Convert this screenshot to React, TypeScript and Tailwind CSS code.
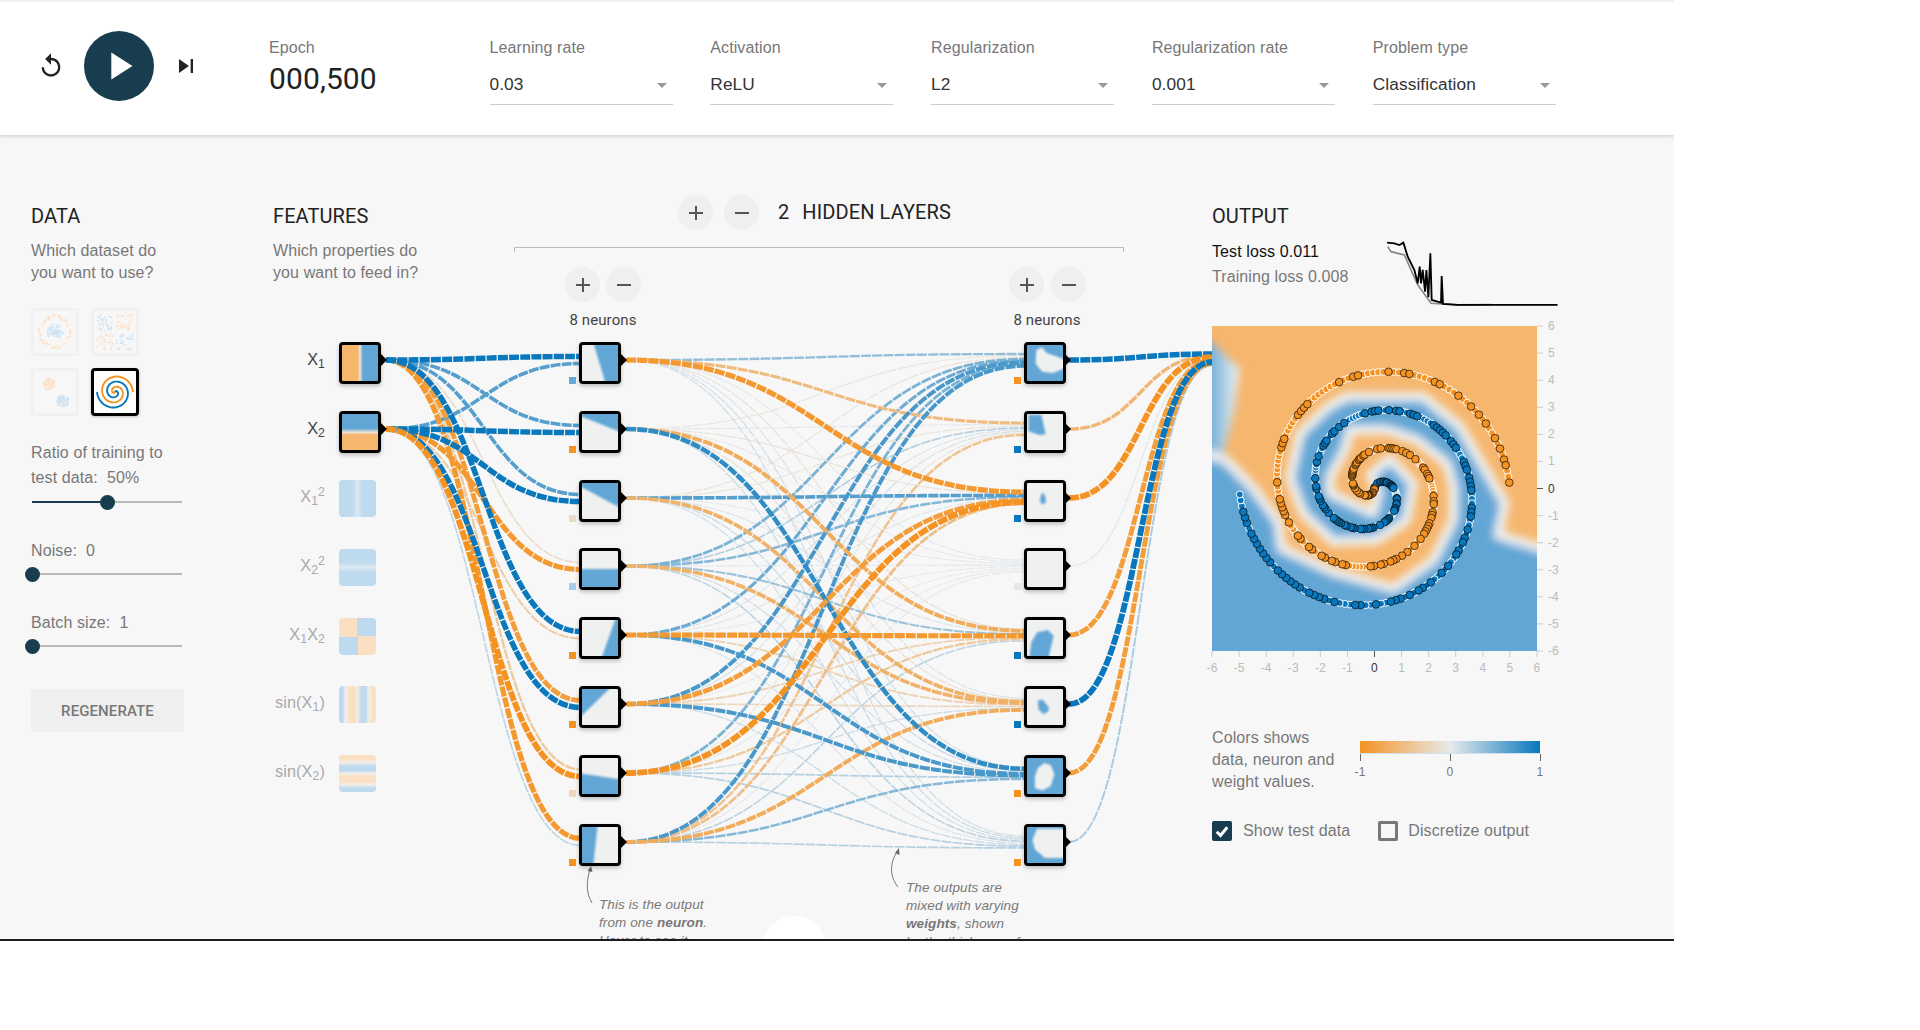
import React from "react";

const BLUE = "#0877bd";
const ORANGE = "#f59322";
const MID = "#e8eaeb";
const FIELD_BLUE = "#62a6d5";
const FIELD_ORANGE = "#f6b66e";

const ROW_TOPS = [342, 411, 480, 548, 617, 686, 755, 824];

// weights read off the reference by eye
const INPUT_WEIGHTS = [
  [0.95, 0.65],
  [0.65, 0.95],
  [0.65, 0.95],
  [-0.2, -0.9],
  [0.95, -0.35],
  [-0.85, 0.95],
  [-0.4, -1],
  [-0.9, 0.22],
];

// columns: first layer neuron, rows: second layer neuron
const HIDDEN_WEIGHTS = [
  [0.4, -0.08, -0.1, 0.5, 0.55, 0.7, 0.5, 0.7],
  [-0.55, 0.04, -0.1, 0.25, 0.08, 0.1, -0.08, -0.45],
  [-0.9, -0.12, 0.65, 0.45, 0.06, -0.85, -1, -0.5],
  [0.03, 0.03, 0.03, 0.04, 0.03, -0.03, 0.03, 0.03],
  [-0.12, -0.7, 0.08, 0.35, -0.9, -0.3, -0.4, 0.22],
  [0.08, -0.12, -0.65, -0.65, -0.3, -0.25, 0.15, -0.7],
  [0.12, 0.8, 0.15, 0.12, 0.7, 0.7, 0.25, 0.45],
  [0.12, 0.15, 0.12, 0.22, 0.08, 0.15, 0.25, 0.25],
];

const OUTPUT_WEIGHTS = [0.95, -0.6, -1, 0.06, -0.85, 1, -0.85, 0.3];

function hex(c: string) {
  return [1, 3, 5].map((i) => parseInt(c.slice(i, i + 2), 16));
}

function weightColor(w: number) {
  const a = hex(MID);
  const b = hex(w > 0 ? BLUE : ORANGE);
  const t = Math.min(1, Math.pow(Math.abs(w), 1.1) * 1.05);
  const m = a.map((v, i) => Math.round(v + (b[i] - v) * t));
  return `rgb(${m[0]},${m[1]},${m[2]})`;
}

function Link({ x0, y0, x1, y1, w }: { x0: number; y0: number; x1: number; y1: number; w: number }) {
  const mid = (x0 + x1) / 2;
  return (
    <path
      d={`M${x0} ${y0}C${mid} ${y0} ${mid} ${y1} ${x1} ${y1}`}
      fill="none"
      stroke={weightColor(w)}
      strokeWidth={1 + 4.8 * Math.pow(Math.abs(w), 1.4)}
      strokeDasharray="10 1.2"
    />
  );
}

function buildLinks() {
  const links: { x0: number; y0: number; x1: number; y1: number; w: number }[] = [];
  INPUT_WEIGHTS.forEach((pair, n) => {
    pair.forEach((w, i) => {
      links.push({ x0: 386, y0: [342, 411][i] + 18, x1: 581, y1: ROW_TOPS[n] + 14.5 + i * 7, w });
    });
  });
  HIDDEN_WEIGHTS.forEach((row, n) => {
    row.forEach((w, j) => {
      links.push({ x0: 626, y0: ROW_TOPS[j] + 18, x1: 1024, y1: ROW_TOPS[n] + 12 + j * 1.7, w });
    });
  });
  OUTPUT_WEIGHTS.forEach((w, n) => {
    links.push({ x0: 1069, y0: ROW_TOPS[n] + 18, x1: 1212, y1: 354 + n * 1.6, w });
  });
  return links.sort((a, b) => Math.abs(a.w) - Math.abs(b.w));
}

function Arrow({ x, y }: { x: number; y: number }) {
  return <path d={`M${x} ${y - 6}L${x + 6} ${y}L${x} ${y + 6}z`} fill="#000" />;
}

function Network() {
  return (
    <svg viewBox="273 135 939 806" className="absolute left-0 top-0 h-[806px] w-[939px]">
      <path d="M514.5 252V247.5H1123.5V252" fill="none" stroke="#bbb" strokeWidth="1" />
      {buildLinks().map((l, i) => (
        <Link key={i} {...l} />
      ))}
      {[342, 411].map((y) => (
        <Arrow key={y} x={381} y={y + 18} />
      ))}
      {ROW_TOPS.map((y) => (
        <Arrow key={y} x={621} y={y + 18} />
      ))}
      {ROW_TOPS.map((y) => (
        <Arrow key={y} x={1065} y={y + 18} />
      ))}
      <path d="M592 903C585 892 587 878 590.5 868" fill="none" stroke="#777" strokeWidth="1" />
      <path d="M587.5 871L591 866L592.5 872z" fill="#666" />
      <path d="M898 887C889 876 890 862 897.5 851" fill="none" stroke="#777" strokeWidth="1" />
      <path d="M895 853L899 848L899.5 855z" fill="#666" />
    </svg>
  );
}

const P = FIELD_BLUE;
const W = "#eff1f1";

const LAYER_ONE: { bias: string; pts: string }[] = [
  { bias: "#66a9d8", pts: "30,0 100,0 100,100 67,100" },
  { bias: ORANGE, pts: "0,3 0,0 100,0 100,52" },
  { bias: "#e9dac7", pts: "0,6 0,0 100,0 100,72" },
  { bias: "#a9cde6", pts: "0,50 100,50 100,100 0,100" },
  { bias: ORANGE, pts: "96,0 100,0 100,100 52,100" },
  { bias: ORANGE, pts: "0,0 88,0 0,85" },
  { bias: "#edd6be", pts: "0,42 30,48 100,60 100,100 0,100" },
  { bias: ORANGE, pts: "0,0 44,0 31,100 0,100" },
];

const LAYER_TWO: { bias: string; base: string; fill: string; pts: string }[] = [
  { bias: ORANGE, base: P, fill: W, pts: "26,14 42,6 54,22 100,42 100,62 72,78 42,74 24,52" },
  { bias: BLUE, base: W, fill: P, pts: "4,2 40,2 52,56 34,58 4,48" },
  { bias: BLUE, base: W, fill: P, pts: "40,30 46,28 52,42 52,56 40,58 36,48" },
  { bias: "#e7e7e5", base: W, fill: W, pts: "1,1" },
  { bias: BLUE, base: W, fill: P, pts: "6,100 12,62 28,34 58,28 74,44 58,100" },
  { bias: BLUE, base: W, fill: P, pts: "30,32 44,30 60,50 60,62 46,70 32,56" },
  { bias: ORANGE, base: P, fill: W, pts: "30,28 48,14 66,20 76,46 66,78 44,90 22,84 22,52" },
  { bias: ORANGE, base: P, fill: W, pts: "28,5 100,5 100,86 50,86 22,62 15,36" },
];

function clampPts(pts: string) {
  return pts
    .split(" ")
    .map((p) =>
      p
        .split(",")
        .map((v) => (+v <= 0 ? -12 : +v >= 100 ? 112 : +v))
        .join(",")
    )
    .join(" ");
}

function Neuron({ left, top, base, fill, pts, bias }: { left: number; top: number; base: string; fill: string; pts: string; bias: string }) {
  return (
    <>
      <div
        className="absolute h-[42px] w-[42px] overflow-hidden rounded-[4px] border-[3px] border-black shadow-[0_2px_4px_rgba(0,0,0,0.25)]"
        style={{ left: left - 273, top: top - 135, background: base }}
      >
        <svg viewBox="0 0 100 100" className="h-full w-full overflow-visible blur-[1px]">
          <polygon points={clampPts(pts)} fill={fill} />
        </svg>
      </div>
      <div className="absolute h-[7px] w-[7px]" style={{ left: left - 283, top: top + 35 - 135, background: bias }} />
    </>
  );
}

const FEATURES = [
  { top: 480, label: <>X<sub>1</sub><sup>2</sup></>, cls: "bg-[linear-gradient(90deg,#bedaee_0%,#bedaee_36%,#dde9f1_50%,#bedaee_64%,#bedaee_100%)]" },
  { top: 549, label: <>X<sub>2</sub><sup>2</sup></>, cls: "bg-[linear-gradient(180deg,#bedaee_0%,#bedaee_36%,#dde9f1_50%,#bedaee_64%,#bedaee_100%)]" },
  { top: 618, label: <>X<sub>1</sub>X<sub>2</sub></>, cls: "bg-[conic-gradient(#bedaee_0deg,#bedaee_90deg,#fbdfc3_90deg,#fbdfc3_180deg,#bedaee_180deg,#bedaee_270deg,#fbdfc3_270deg,#fbdfc3_360deg)]" },
  { top: 686, label: <>sin(X<sub>1</sub>)</>, cls: "bg-[linear-gradient(90deg,#bedaee_0%,#bedaee_10%,#f3eee8_18%,#fbdfc3_28%,#fbdfc3_42%,#f3eee8_50%,#bedaee_60%,#bedaee_72%,#f3eee8_82%,#fbdfc3_90%,#fbdfc3_100%)]" },
  { top: 755, label: <>sin(X<sub>2</sub>)</>, cls: "bg-[linear-gradient(180deg,#fbdfc3_0%,#fbdfc3_12%,#f3eee8_20%,#bedaee_30%,#bedaee_42%,#f3eee8_50%,#fbdfc3_58%,#fbdfc3_72%,#f3eee8_80%,#bedaee_90%,#bedaee_100%)]" },
];

function FeatureLabel({ top, active, children }: { top: number; active?: boolean; children: React.ReactNode }) {
  return (
    <div
      className={`absolute left-[-67px] w-[119px] text-right font-['Liberation_Sans',sans-serif] text-[16.3px] leading-[42px] ${active ? "text-[#444]" : "text-[#aaa]"}`}
      style={{ top: top - 135 }}
    >
      {children}
    </div>
  );
}

function rng(seed: number) {
  let s = seed;
  return () => {
    s = (s * 16807) % 2147483647;
    return s / 2147483647;
  };
}

function dots(kind: "circle" | "xor" | "gauss") {
  const r = rng(kind.length * 977 + 5);
  const out: { x: number; y: number; c: string }[] = [];
  const L = "#cfe3f2";
  const O = "#fbe3ca";
  for (let i = 0; i < 160; i++) {
    if (kind === "circle") {
      const t = r() * Math.PI * 2;
      if (i % 2) {
        const d = r() * 8;
        out.push({ x: 21 + d * Math.cos(t), y: 21 + d * Math.sin(t), c: L });
      } else {
        const d = 13.5 + r() * 3.5;
        out.push({ x: 21 + d * Math.cos(t), y: 21 + d * Math.sin(t), c: O });
      }
    } else if (kind === "xor") {
      const x = 3 + r() * 36;
      const y = 3 + r() * 36;
      if (Math.abs(x - 21) < 1.5 || Math.abs(y - 21) < 1.5) continue;
      out.push({ x, y, c: (x - 21) * (y - 21) > 0 ? L : O });
    } else {
      const t = r() * Math.PI * 2;
      const d = Math.sqrt(r()) * 6;
      const pos = i % 2 === 0;
      out.push({ x: (pos ? 29 : 15) + d * Math.cos(t), y: (pos ? 30 : 13) + d * Math.sin(t), c: pos ? L : O });
    }
  }
  return out;
}

function DotThumb({ kind }: { kind: "circle" | "xor" | "gauss" }) {
  return (
    <div className="h-[48px] w-[48px] rounded-[4px] border-[3px] border-[#f1f1f1]">
      <svg viewBox="0 0 42 42" className="h-[42px] w-[42px]">
        {dots(kind).map((d, i) => (
          <rect key={i} x={d.x - 0.8} y={d.y - 0.8} width="1.6" height="1.6" fill={d.c} />
        ))}
      </svg>
    </div>
  );
}

function spiralLine(delta: number) {
  const pts: string[] = [];
  for (let i = 0; i <= 80; i++) {
    const f = i / 80;
    const r = f * 18;
    const t = 1.75 * f * 2 * Math.PI + delta;
    pts.push(`${(21 + r * Math.sin(t)).toFixed(2)},${(21 - r * Math.cos(t)).toFixed(2)}`);
  }
  return pts.join(" ");
}

function SpiralThumb() {
  return (
    <div className="h-[48px] w-[48px] rounded-[4px] border-[3px] border-black bg-white shadow-[0_1px_3px_rgba(0,0,0,0.25)]">
      <svg viewBox="0 0 42 42" className="h-[42px] w-[42px]">
        <polyline points={spiralLine(0)} fill="none" stroke={BLUE} strokeWidth="1.9" />
        <polyline points={spiralLine(Math.PI)} fill="none" stroke={ORANGE} strokeWidth="1.9" />
      </svg>
    </div>
  );
}

function Slider({ value }: { value: number }) {
  return (
    <div className="relative h-[16px] w-[152px]">
      <div className="absolute left-[1px] top-[7px] h-[2px] w-[150px] bg-[#b9b9b9]" />
      <div className="absolute left-[1px] top-[7px] h-[2px] bg-[#183d4e]" style={{ width: value * 150 }} />
      <div
        className="absolute top-[0.5px] h-[15px] w-[15px] rounded-full bg-[#183d4e]"
        style={{ left: value * 150 - 6.5 }}
      />
    </div>
  );
}

function Select({ label, value }: { label: string; value: string }) {
  return (
    <div className="w-[183px] font-['Liberation_Sans',sans-serif]">
      <div className="text-[16px] leading-[20px] text-[#777]">{label}</div>
      <div className="mt-[11px] flex h-[36px] items-center justify-between border-b border-[#ccc] pb-[3px] pr-[6px]">
        <span className="text-[17.3px] text-[#333]">{value}</span>
        <span className="h-0 w-0 border-x-[5px] border-t-[5px] border-x-transparent border-t-[#999]" />
      </div>
    </div>
  );
}

function RoundButton({ minus }: { minus?: boolean }) {
  return (
    <div className="flex h-[35px] w-[35px] items-center justify-center rounded-full bg-[#efefef]">
      <svg viewBox="0 0 24 24" className="h-[24px] w-[24px]" fill="#555">
        <path d={minus ? "M19 13H5v-2h14v2z" : "M19 13h-6v6h-2v-6H5v-2h6V5h2v6h6v2z"} />
      </svg>
    </div>
  );
}

const BOUNDARY =
  "20,700 66,706 110,722 190,805 265,905 275,985 430,1055 610,1105 730,1020 790,900 790,800 770,730 680,660 590,630 480,630 465,690 420,770 420,820 550,880 565,815 540,765 600,715 670,790 650,900 560,960 430,965 340,880 300,775 330,640 415,560 470,530 700,530 810,620 880,740 945,850 925,945 1090,995 1090,1340 20,1340";

function spiralPoints(delta: number, seed: number) {
  const r = rng(seed);
  const train: { x: number; y: number }[] = [];
  const test: { x: number; y: number }[] = [];
  for (let i = 0; i < 250; i++) {
    const f = i / 250;
    const d = f * 5;
    const t = 1.75 * f * 2 * Math.PI + delta;
    const p = { x: 553.5 + 81.25 * d * Math.sin(t), y: 805.5 - 81.25 * d * Math.cos(t) };
    if (r() < 0.5) test.push(p);
    else train.push(p);
  }
  return { train, test };
}

function Points() {
  const blue = spiralPoints(0, 4242);
  const orange = spiralPoints(Math.PI, 1717);
  return (
    <>
      {[...blue.train.map((p) => ({ ...p, c: BLUE })), ...orange.train.map((p) => ({ ...p, c: ORANGE }))].map((p, i) => (
        <circle key={i} cx={p.x} cy={p.y} r="10.5" fill={p.c} stroke="#fff" strokeWidth="3" />
      ))}
      {[...blue.test.map((p) => ({ ...p, c: BLUE })), ...orange.test.map((p) => ({ ...p, c: ORANGE }))].map((p, i) => (
        <circle key={i} cx={p.x} cy={p.y} r="11.5" fill={p.c} stroke="#000" strokeOpacity="0.65" strokeWidth="3" />
      ))}
    </>
  );
}

function Plot() {
  const ticks = [-6, -5, -4, -3, -2, -1, 0, 1, 2, 3, 4, 5, 6];
  return (
    <svg viewBox="1212 326 350 350" className="h-[350px] w-[350px] overflow-visible font-['Liberation_Sans',sans-serif]">
      <defs>
        <filter id="fieldBlur" x="-10%" y="-10%" width="120%" height="120%">
          <feGaussianBlur stdDeviation="13" />
        </filter>
        <linearGradient id="cornerFade" x1="0" x2="1" y1="0" y2="0">
          <stop offset="0.3" stopColor="#6fadd8" />
          <stop offset="0.95" stopColor="#e9eef0" />
        </linearGradient>
      </defs>
      <svg x="1212" y="326" width="325" height="325" viewBox="66 318 975 975">
        <rect x="66" y="318" width="975" height="975" fill={FIELD_ORANGE} />
        <g filter="url(#fieldBlur)">
          <polygon points="20,330 66,370 150,445 135,560 100,705 20,710" fill="url(#cornerFade)" />
          <polygon points={BOUNDARY} fill={FIELD_BLUE} stroke="#eef1f2" strokeWidth="28" strokeLinejoin="round" />
        </g>
        <Points />
      </svg>
      {ticks.map((t) => {
        const y = 651 - (t + 6) * 27.083;
        const x = 1212 + (t + 6) * 27.083;
        const zero = t === 0;
        return (
          <g key={t}>
            <line x1="1537" x2="1543" y1={y} y2={y} stroke={zero ? "#555" : "#ccc"} />
            <text x="1548" y={y + 4} fontSize="12" fill={zero ? "#333" : "#bbb"}>
              {t}
            </text>
            <line x1={x} x2={x} y1="651" y2="657" stroke={zero ? "#555" : "#ccc"} />
            <text x={x} y="672" fontSize="12" textAnchor="middle" fill={zero ? "#333" : "#bbb"}>
              {t}
            </text>
          </g>
        );
      })}
    </svg>
  );
}

function LossChart() {
  const black =
    "588,68 610,70 625,75 637,68 650,110 670,150 680,190 686,140 690,190 695,150 702,215 706,150 712,232 718,100 722,240 750,248 752,168 756,252 800,255 1100,255";
  const gray = "590,80 600,95 640,105 660,150 680,195 720,250 800,255 900,254";
  return (
    <svg viewBox="585 60 520 200" className="h-[66.6px] w-[173.3px]">
      <polyline points={gray} fill="none" stroke="#888" strokeWidth="5" />
      <polyline points={black} fill="none" stroke="#000" strokeWidth="5.5" />
    </svg>
  );
}

export default function App() {
  return (
    <div className="min-h-[1030px] bg-white tracking-[0.1px]">
      <div className="h-[941px] w-[1674px] overflow-hidden border-b-2 border-[#1d1d1d] bg-[#f7f7f7]">
        {/* Top controls */}
        <header className="relative z-10 flex h-[135px] items-start border-t-2 border-[#f0f0f0] bg-white shadow-[0_1px_4px_rgba(0,0,0,0.18)]">
          <div className="ml-[37px] mt-[29px] flex items-center">
            <svg viewBox="0 0 24 24" className="h-[28px] w-[28px]" fill="#222">
              <path d="M12 5V1L7 6l5 5V7c3.31 0 6 2.69 6 6s-2.69 6-6 6-6-2.69-6-6H4c0 4.42 3.58 8 8 8s8-3.58 8-8-3.58-8-8-8z" />
            </svg>
            <div className="ml-[19px] flex h-[70px] w-[70px] items-center justify-center rounded-full bg-[#183d4e]">
              <svg viewBox="0 0 24 24" className="h-[46px] w-[46px]" fill="#fff">
                <path d="M8 5v14l11-7z" />
              </svg>
            </div>
            <svg viewBox="0 0 24 24" className="ml-[18px] h-[28px] w-[28px]" fill="#222">
              <path d="M6 18l8.5-6L6 6v12zM16 6v12h2V6h-2z" />
            </svg>
          </div>
          <div className="ml-[69px] mt-[36px] w-[220.5px]">
            <div className="font-['Liberation_Sans',sans-serif] text-[16px] leading-[20px] text-[#777]">Epoch</div>
            <div className="mt-[1px] font-['Roboto',sans-serif] text-[30px] leading-[40px] text-[#222]">000,500</div>
          </div>
          <div className="mt-[36px] flex gap-[37.8px]">
            <Select label="Learning rate" value="0.03" />
            <Select label="Activation" value="ReLU" />
            <Select label="Regularization" value="L2" />
            <Select label="Regularization rate" value="0.001" />
            <Select label="Problem type" value="Classification" />
          </div>
        </header>

        <main className="relative flex h-[804px]">
          {/* Data column */}
          <section className="w-[273px] pl-[31px] pt-[69px] font-['Liberation_Sans',sans-serif] text-[16px] leading-[22px] text-[#777]">
            <h4 className="font-['Roboto',sans-serif] text-[20px] leading-[24px] text-[#222]">DATA</h4>
            <p className="mt-[12px]">
              Which dataset do
              <br />
              you want to use?
            </p>
            <div className="mt-[24px] grid w-[108px] grid-cols-2 gap-x-[12px] gap-y-[12px]">
              <DotThumb kind="circle" />
              <DotThumb kind="xor" />
              <DotThumb kind="gauss" />
              <SpiralThumb />
            </div>
            <p className="mt-[24px] leading-[25px]">
              Ratio of training to
              <br />
              test data:&nbsp; 50%
            </p>
            <div className="mt-[4px]">
              <Slider value={0.5} />
            </div>
            <p className="mt-[30px]">Noise:&nbsp; 0</p>
            <div className="mt-[4px]">
              <Slider value={0} />
            </div>
            <p className="mt-[30px]">Batch size:&nbsp; 1</p>
            <div className="mt-[4px]">
              <Slider value={0} />
            </div>
            <button className="mt-[35px] h-[43px] w-[153px] rounded-[3px] bg-[#efefef] font-['Roboto',sans-serif] text-[15px] font-medium text-[#777]">
              REGENERATE
            </button>
          </section>

          {/* Network column */}
          <section className="relative w-[939px]">
            <Network />
            <div className="relative flex items-start">
              <div className="w-[405px] pt-[69px] font-['Liberation_Sans',sans-serif] text-[16px] leading-[22px] text-[#777]">
                <h4 className="font-['Roboto',sans-serif] text-[20px] leading-[24px] text-[#222]">FEATURES</h4>
                <p className="mt-[12px]">
                  Which properties do
                  <br />
                  you want to feed in?
                </p>
              </div>
              <div className="flex items-center gap-[11px] pt-[60px]">
                <RoundButton />
                <RoundButton minus />
                <span className="ml-[8px] font-['Roboto',sans-serif] text-[20px] leading-[35px] text-[#222]">2</span>
                <span className="ml-[2px] font-['Roboto',sans-serif] text-[20px] leading-[35px] text-[#222]">HIDDEN LAYERS</span>
              </div>
            </div>

            {/* input nodes */}
            <div className="absolute left-[66px] top-[207px] h-[42px] w-[42px] rounded-[4px] border-[3px] border-black bg-[linear-gradient(90deg,#f6b66e_0%,#f6b66e_44%,#efe4d6_50%,#62a6d5_58%,#62a6d5_100%)] shadow-[0_2px_4px_rgba(0,0,0,0.25)]" />
            <div className="absolute left-[66px] top-[276px] h-[42px] w-[42px] rounded-[4px] border-[3px] border-black bg-[linear-gradient(180deg,#62a6d5_0%,#62a6d5_40%,#efe4d6_51%,#f6b66e_58%,#f6b66e_100%)] shadow-[0_2px_4px_rgba(0,0,0,0.25)]" />
            <FeatureLabel top={338} active>
              X<sub>1</sub>
            </FeatureLabel>
            <FeatureLabel top={407} active>
              X<sub>2</sub>
            </FeatureLabel>
            {FEATURES.map((f) => (
              <React.Fragment key={f.top}>
                <div className={`absolute left-[66px] h-[37px] w-[37px] rounded-[4px] ${f.cls}`} style={{ top: f.top - 135 }} />
                <FeatureLabel top={f.top - 5}>{f.label}</FeatureLabel>
              </React.Fragment>
            ))}

            {/* layer controls */}
            <div className="absolute left-[292px] top-[132px] flex gap-[6px]">
              <RoundButton />
              <RoundButton minus />
            </div>
            <div className="absolute left-[736px] top-[132px] flex gap-[7px]">
              <RoundButton />
              <RoundButton minus />
            </div>
            <div className="absolute left-[280px] top-[176px] w-[100px] text-center font-['Roboto',sans-serif] text-[15px] leading-[18px] text-[#444]">8 neurons</div>
            <div className="absolute left-[724px] top-[176px] w-[100px] text-center font-['Roboto',sans-serif] text-[15px] leading-[18px] text-[#444]">8 neurons</div>

            {LAYER_ONE.map((n, i) => (
              <Neuron key={i} left={579} top={ROW_TOPS[i]} base={W} fill={P} pts={n.pts} bias={n.bias} />
            ))}
            {LAYER_TWO.map((n, i) => (
              <Neuron key={i} left={1023.5} top={ROW_TOPS[i]} base={n.base} fill={n.fill} pts={n.pts} bias={n.bias} />
            ))}

            {/* callouts, cut off by the page edge */}
            <div className="absolute left-[326px] top-[761px] font-['Liberation_Sans',sans-serif] text-[13.5px] italic leading-[18px] text-[#777]">
              This is the output
              <br />
              from one <b>neuron</b>.
              <br />
              Hover to see it
            </div>
            <div className="absolute left-[633px] top-[744px] font-['Liberation_Sans',sans-serif] text-[13.5px] italic leading-[18px] text-[#777]">
              The outputs are
              <br />
              mixed with varying
              <br />
              <b>weights</b>, shown
              <br />
              by the thickness of
            </div>
            <div className="absolute left-[489px] top-[781px] h-[64px] w-[64px] rounded-full bg-white" />
          </section>

          {/* Output column */}
          <section className="w-[462px] pt-[69px] font-['Liberation_Sans',sans-serif] text-[16px] leading-[25px] text-[#777]">
            <h4 className="font-['Roboto',sans-serif] text-[20px] leading-[24px] text-[#222]">OUTPUT</h4>
            <div className="mt-[11px] flex h-[87px]">
              <div className="w-[174px]">
                <div className="text-[#111]">Test loss 0.011</div>
                <div>Training loss 0.008</div>
              </div>
              <div className="pt-[1px]">
                <LossChart />
              </div>
            </div>
            <Plot />
            <div className="mt-[51px] flex">
              <p className="w-[148px] leading-[22px]">
                Colors shows
                <br />
                data, neuron and
                <br />
                weight values.
              </p>
              <div className="w-[180px] pt-[14px]">
                <div className="h-[13px] border-b border-[#cfe0ee] bg-[linear-gradient(90deg,#f59322,#e8eaeb,#0877bd)]" />
                <div className="flex justify-between text-[12px] leading-[16px] text-[#777]">
                  {["-1", "0", "1"].map((t) => (
                    <div key={t} className="flex w-0 flex-col items-center">
                      <span className="h-[7px] w-[1px] shrink-0 bg-[#666]" />
                      <span className="mt-[3px]">{t}</span>
                    </div>
                  ))}
                </div>
              </div>
            </div>
            <div className="mt-[28px] flex items-center">
              <span className="flex h-[20px] w-[20px] items-center justify-center rounded-[2px] bg-[#183d4e]">
                <svg viewBox="0 0 24 24" className="h-[18px] w-[18px]" fill="none" stroke="#fff" strokeWidth="4">
                  <path d="M5 13l5 5 9-11" />
                </svg>
              </span>
              <span className="ml-[11px] leading-[20px]">Show test data</span>
              <span className="ml-[28px] h-[20px] w-[20px] rounded-[2px] border-[3px] border-[#777]" />
              <span className="ml-[10px] leading-[20px]">Discretize output</span>
            </div>
          </section>
        </main>
      </div>
    </div>
  );
}
